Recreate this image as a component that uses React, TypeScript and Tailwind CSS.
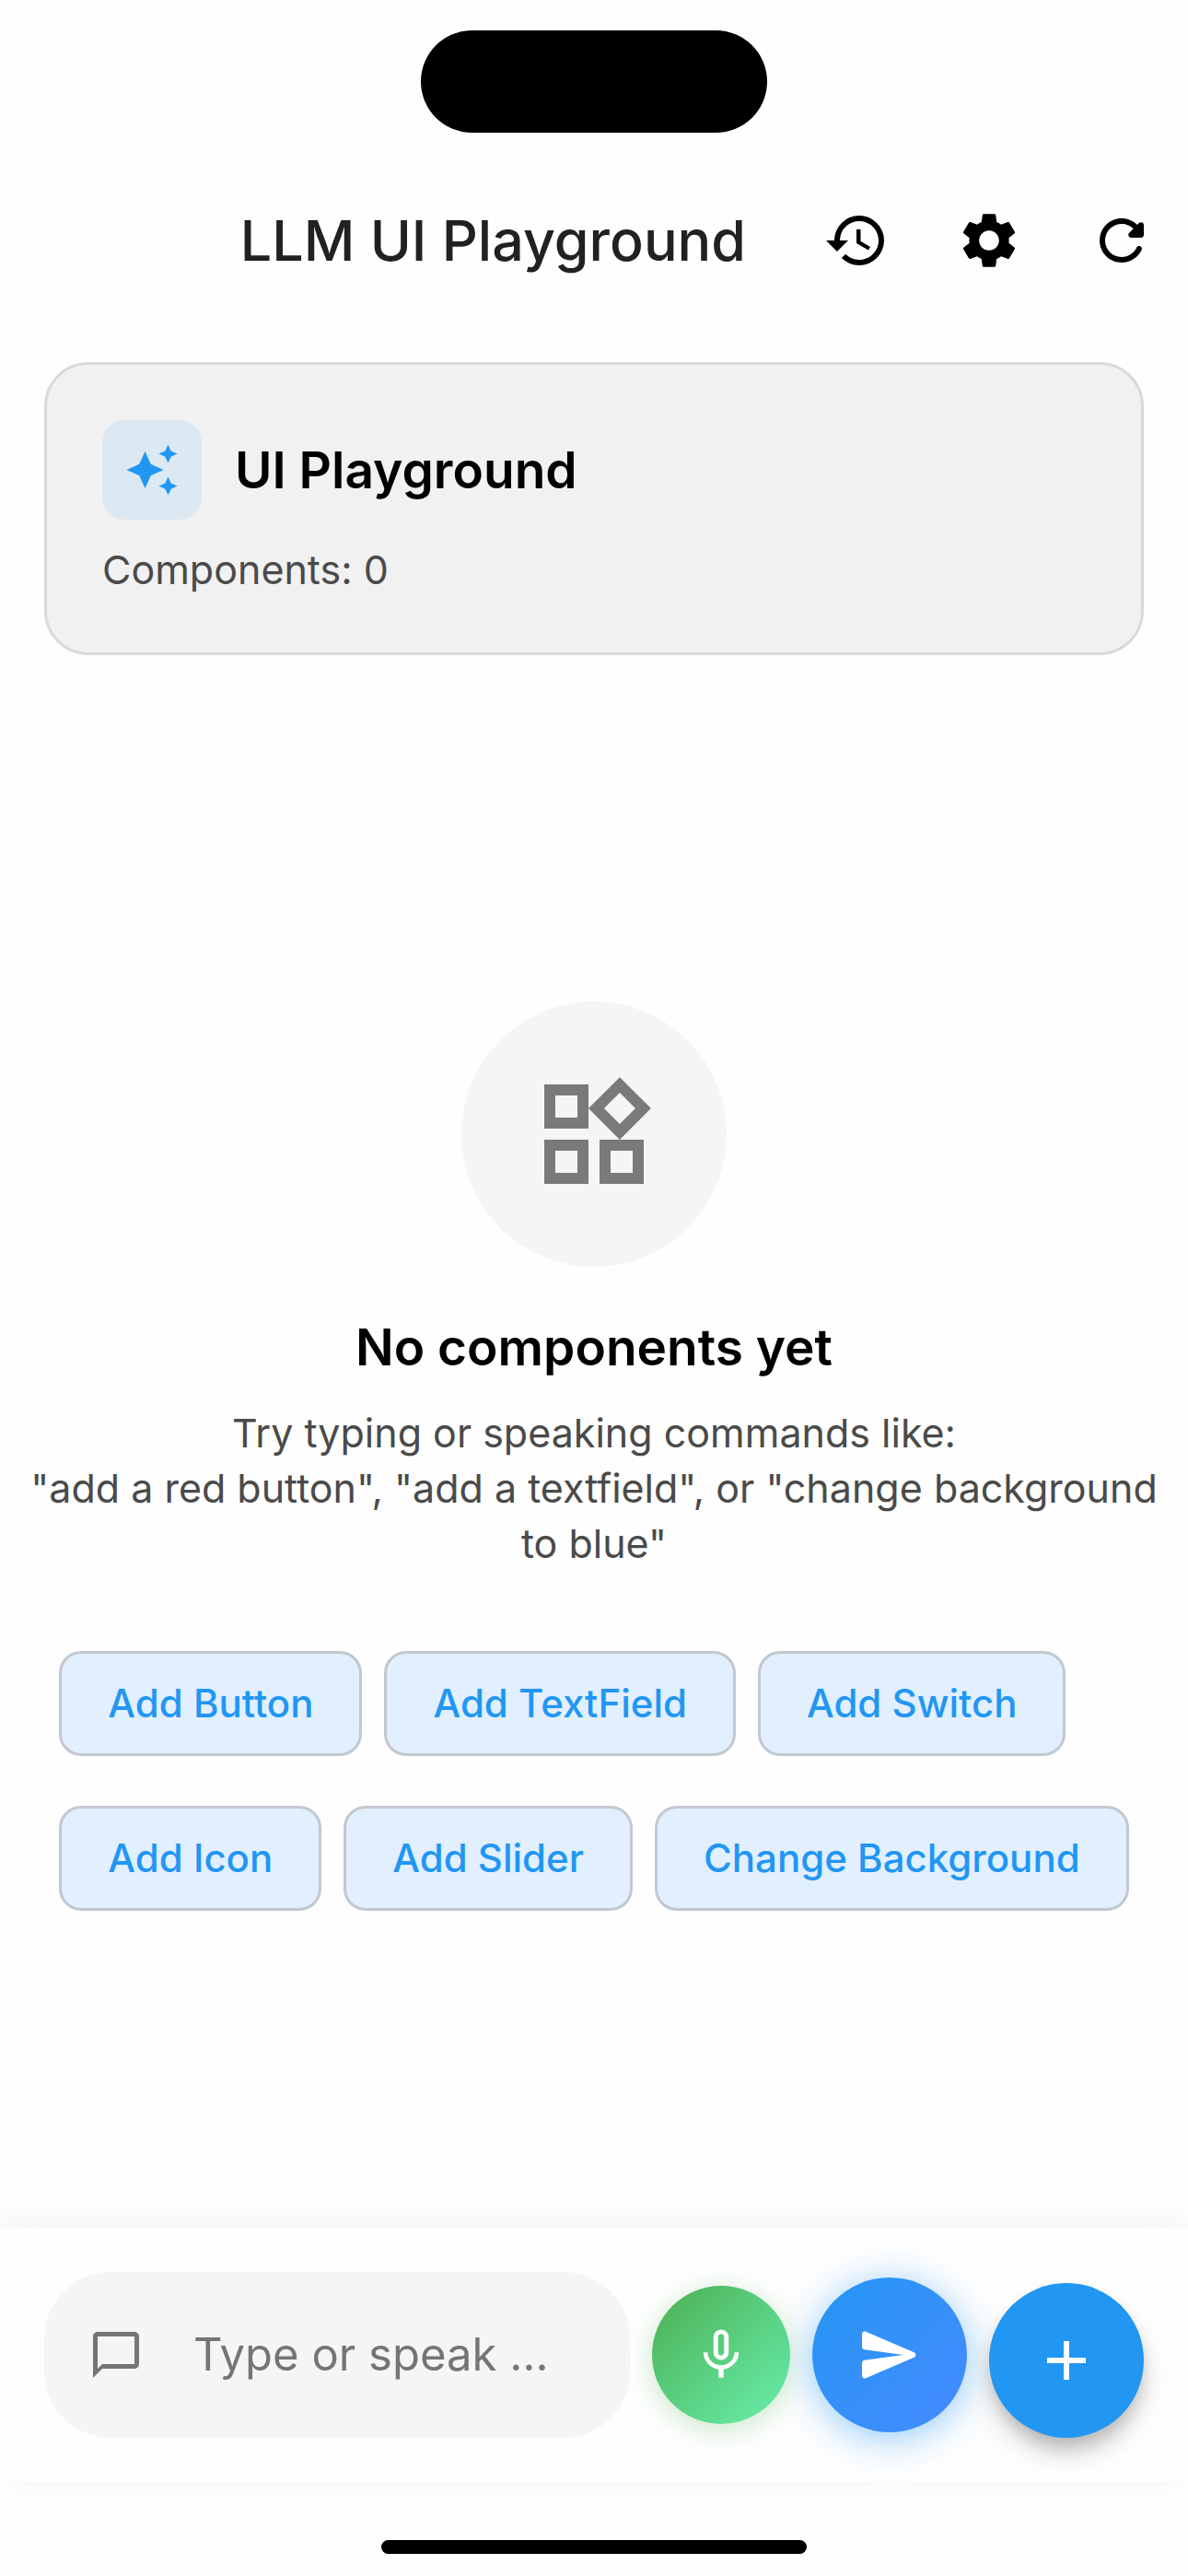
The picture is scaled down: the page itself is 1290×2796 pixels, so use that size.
import type { ReactNode } from "react";
import {
  MdAdd,
  MdAutoAwesome,
  MdHistory,
  MdMicNone,
  MdOutlineChatBubbleOutline,
  MdOutlineWidgets,
  MdSettings,
} from "react-icons/md";

const suggestionRows = [
  ["Add Button", "Add TextField", "Add Switch"],
  ["Add Icon", "Add Slider", "Change Background"],
];

function RefreshIcon({ className }: { className?: string }) {
  return (
    <svg viewBox="0 0 24 24" fill="currentColor" className={className} aria-hidden="true">
      <path d="M17.65 6.35c-1.63-1.63-3.94-2.57-6.48-2.31-3.67.37-6.69 3.35-7.1 7.02C3.52 15.91 7.27 20 12 20c3.19 0 5.93-1.87 7.21-4.56.32-.67-.16-1.44-.9-1.44-.37 0-.72.2-.88.53-1.13 2.43-3.84 3.97-6.8 3.31-2.22-.49-4.01-2.3-4.48-4.52C5.31 9.44 8.26 6 12 6c1.66 0 3.14.69 4.22 1.78l-1.51 1.51c-.63.63-.19 1.71.7 1.71H19c.55 0 1-.45 1-1V6.41c0-.89-1.08-1.34-1.71-.71l-.64.65z" />
    </svg>
  );
}

function SendIcon({ className }: { className?: string }) {
  return (
    <svg viewBox="0 0 24 24" fill="currentColor" className={className} aria-hidden="true">
      <path d="M3.4 20.4l17.45-7.48c.81-.35.81-1.49 0-1.84L3.4 3.6c-.66-.29-1.39.2-1.39.91L2 9.12c0 .5.37.93.87.99L17 12 2.87 13.88c-.5.07-.87.5-.87 1l.01 4.61c0 .71.73 1.2 1.39.91z" />
    </svg>
  );
}

function HeaderButton({ label, children }: { label: string; children: ReactNode }) {
  return (
    <button type="button" aria-label={label} className="flex size-36 items-center justify-center text-black">
      {children}
    </button>
  );
}

function Header() {
  return (
    <header className="flex h-[168px] items-center justify-end">
      <h1 className="mr-12 text-[61px] leading-none font-medium text-[#212121]">LLM UI Playground</h1>
      <HeaderButton label="History">
        <MdHistory className="size-[72px]" />
      </HeaderButton>
      <HeaderButton label="Settings">
        <MdSettings className="size-[72px]" />
      </HeaderButton>
      <HeaderButton label="Reset">
        <RefreshIcon className="size-[72px]" />
      </HeaderButton>
    </header>
  );
}

function SummaryCard() {
  return (
    <section className="m-12 rounded-[48px] border-3 border-[#d9d9d9] bg-[#f1f1f1] p-[60px]">
      <div className="flex items-center gap-9">
        <div className="flex size-[108px] items-center justify-center rounded-3xl bg-[#dce9f3] text-[#2196f3]">
          <MdAutoAwesome className="size-[60px]" />
        </div>
        <h2 className="text-[55px] leading-[78px] font-semibold text-black">UI Playground</h2>
      </div>
      <p className="mt-6 text-[43px] leading-[60px] text-[#4a4a4a]">Components: 0</p>
    </section>
  );
}

function EmptyState() {
  return (
    <section className="flex flex-1 flex-col items-center justify-center">
      <div className="flex size-72 items-center justify-center rounded-full bg-[#f5f5f5] text-[#7a7a7a]">
        <MdOutlineWidgets className="size-36" />
      </div>
      <h2 className="mt-12 text-[55px] leading-[78px] font-semibold text-black">No components yet</h2>
      <p className="mt-6 px-6 text-center text-[43px] leading-[60px] text-[#4a4a4a]">
        Try typing or speaking commands like:
        <br />
        "add a red button", "add a textfield", or "change background to blue"
      </p>
      <div className="mt-[87px] mb-4 flex flex-col gap-[54px]">
        {suggestionRows.map((row) => (
          <div key={row[0]} className="flex gap-6">
            {row.map((label) => (
              <button
                key={label}
                type="button"
                className="rounded-3xl border-3 border-[#c3c7d0] bg-[#e1efff] px-[50px] py-6 text-[42px] leading-[60px] font-medium whitespace-nowrap text-[#2196f3]"
              >
                {label}
              </button>
            ))}
          </div>
        ))}
      </div>
    </section>
  );
}

function Composer() {
  return (
    <form
      className="flex items-center gap-6 bg-[#fefefe] p-12 shadow-[0_-6px_36px_rgba(0,0,0,0.05)]"
      onSubmit={(event) => event.preventDefault()}
    >
      <label className="flex h-[180px] min-w-0 flex-1 items-center gap-[54px] rounded-[72px] bg-[#f5f5f5] px-12 text-[#757575]">
        <MdOutlineChatBubbleOutline className="size-[60px] shrink-0" />
        <input
          type="text"
          aria-label="Command"
          placeholder="Type or speak …"
          className="w-full min-w-0 bg-transparent text-[49px] text-black outline-none placeholder:text-[#757575]"
        />
      </label>
      <button
        type="button"
        aria-label="Speak"
        className="flex size-[150px] items-center justify-center rounded-full bg-linear-to-br from-[#4caf50] to-[#69f0ae] text-white shadow-[0_6px_30px_rgba(76,175,80,0.3)]"
      >
        <MdMicNone className="size-[66px]" />
      </button>
      <button
        type="submit"
        aria-label="Send"
        className="flex size-[168px] items-center justify-center rounded-full bg-linear-to-br from-[#2196f3] to-[#448aff] text-white shadow-[0_6px_42px_rgba(33,150,243,0.5)]"
      >
        <SendIcon className="size-[72px]" />
      </button>
      <button
        type="button"
        aria-label="Add component"
        className="flex size-[168px] items-center justify-center self-end rounded-full bg-[#2196f3] text-white shadow-[0_12px_18px_-3px_rgba(0,0,0,0.18),0_18px_30px_rgba(0,0,0,0.14)]"
      >
        <MdAdd className="size-[72px]" />
      </button>
    </form>
  );
}

export default function App() {
  return (
    <div className="flex min-h-screen flex-col bg-[#fefefe] font-['Inter',sans-serif]">
      <div className="flex h-[177px] justify-center pt-[33px]">
        <div className="h-[111px] w-[376px] rounded-full bg-black" />
      </div>
      <Header />
      <main className="flex flex-1 flex-col">
        <SummaryCard />
        <EmptyState />
      </main>
      <Composer />
      <div className="flex h-[102px] items-end justify-center pb-6">
        <div className="h-[15px] w-[462px] rounded-full bg-black" />
      </div>
    </div>
  );
}
